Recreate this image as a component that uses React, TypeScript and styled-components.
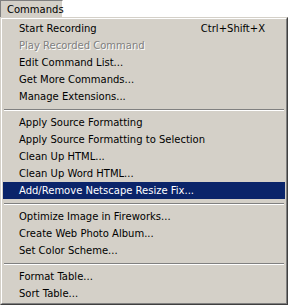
import styled, { createGlobalStyle } from "styled-components";

const GlobalStyle = createGlobalStyle`
  html, body {
    margin: 0;
    padding: 0;
    background: #ffffff;
  }
  body {
    font-family: "DejaVu Sans", Tahoma, sans-serif;
    font-size: 10px;
    color: #000000;
  }
`;

const Page = styled.div`
  width: 288px;
  display: flex;
  flex-direction: column;
`;

const MenuBar = styled.div`
  display: flex;
  height: 17px;
  background: #ffffff;
`;

const MenuTitle = styled.div`
  display: flex;
  align-items: center;
  box-sizing: border-box;
  width: 63px;
  height: 17px;
  padding-left: 6px;
  background: #d4d0c8;
  border-top: 1px solid #808080;
  border-left: 1px solid #808080;
  border-right: 1px solid #ffffff;
`;

const Dropdown = styled.div`
  box-sizing: border-box;
  width: 288px;
  background: #d4d0c8;
  border-top: 1px solid #d4d0c8;
  border-left: 1px solid #d4d0c8;
  border-right: 1px solid #404040;
  border-bottom: 1px solid #404040;
`;

const Frame = styled.div`
  display: flex;
  flex-direction: column;
  padding: 1px;
  border-top: 1px solid #ffffff;
  border-left: 1px solid #ffffff;
  border-right: 1px solid #808080;
  border-bottom: 1px solid #808080;
`;

const Item = styled.div<{ $active?: boolean; $disabled?: boolean }>`
  display: flex;
  align-items: center;
  justify-content: space-between;
  height: 17px;
  padding: 0 20px 0 16px;
  white-space: nowrap;
  background: ${(p) => (p.$active ? "#0a246a" : "transparent")};
  color: ${(p) => (p.$active ? "#ffffff" : p.$disabled ? "#808080" : "#000000")};
  text-shadow: ${(p) => (p.$disabled ? "1px 1px 0 #ffffff" : "none")};
`;

const Shortcut = styled.span`
  margin-left: 20px;
`;

const Separator = styled.div`
  display: flex;
  align-items: center;
  height: 9px;
  padding: 0 1px;
  &::after {
    content: "";
    flex: 1;
    border-top: 1px solid #808080;
    border-bottom: 1px solid #ffffff;
  }
`;

type Entry =
  | { sep: true }
  | { label: string; shortcut?: string; disabled?: boolean; active?: boolean };

const entries: Entry[] = [
  { label: "Start Recording", shortcut: "Ctrl+Shift+X" },
  { label: "Play Recorded Command", disabled: true },
  { label: "Edit Command List..." },
  { label: "Get More Commands..." },
  { label: "Manage Extensions..." },
  { sep: true },
  { label: "Apply Source Formatting" },
  { label: "Apply Source Formatting to Selection" },
  { label: "Clean Up HTML..." },
  { label: "Clean Up Word HTML..." },
  { label: "Add/Remove Netscape Resize Fix...", active: true },
  { sep: true },
  { label: "Optimize Image in Fireworks..." },
  { label: "Create Web Photo Album..." },
  { label: "Set Color Scheme..." },
  { sep: true },
  { label: "Format Table..." },
  { label: "Sort Table..." },
];

export default function App() {
  return (
    <Page>
      <GlobalStyle />
      <MenuBar>
        <MenuTitle>Commands</MenuTitle>
      </MenuBar>
      <Dropdown>
        <Frame>
          {entries.map((e, i) =>
            "sep" in e ? (
              <Separator key={i} />
            ) : (
              <Item key={i} $active={e.active} $disabled={e.disabled}>
                <span>{e.label}</span>
                {e.shortcut ? <Shortcut>{e.shortcut}</Shortcut> : null}
              </Item>
            )
          )}
        </Frame>
      </Dropdown>
    </Page>
  );
}
